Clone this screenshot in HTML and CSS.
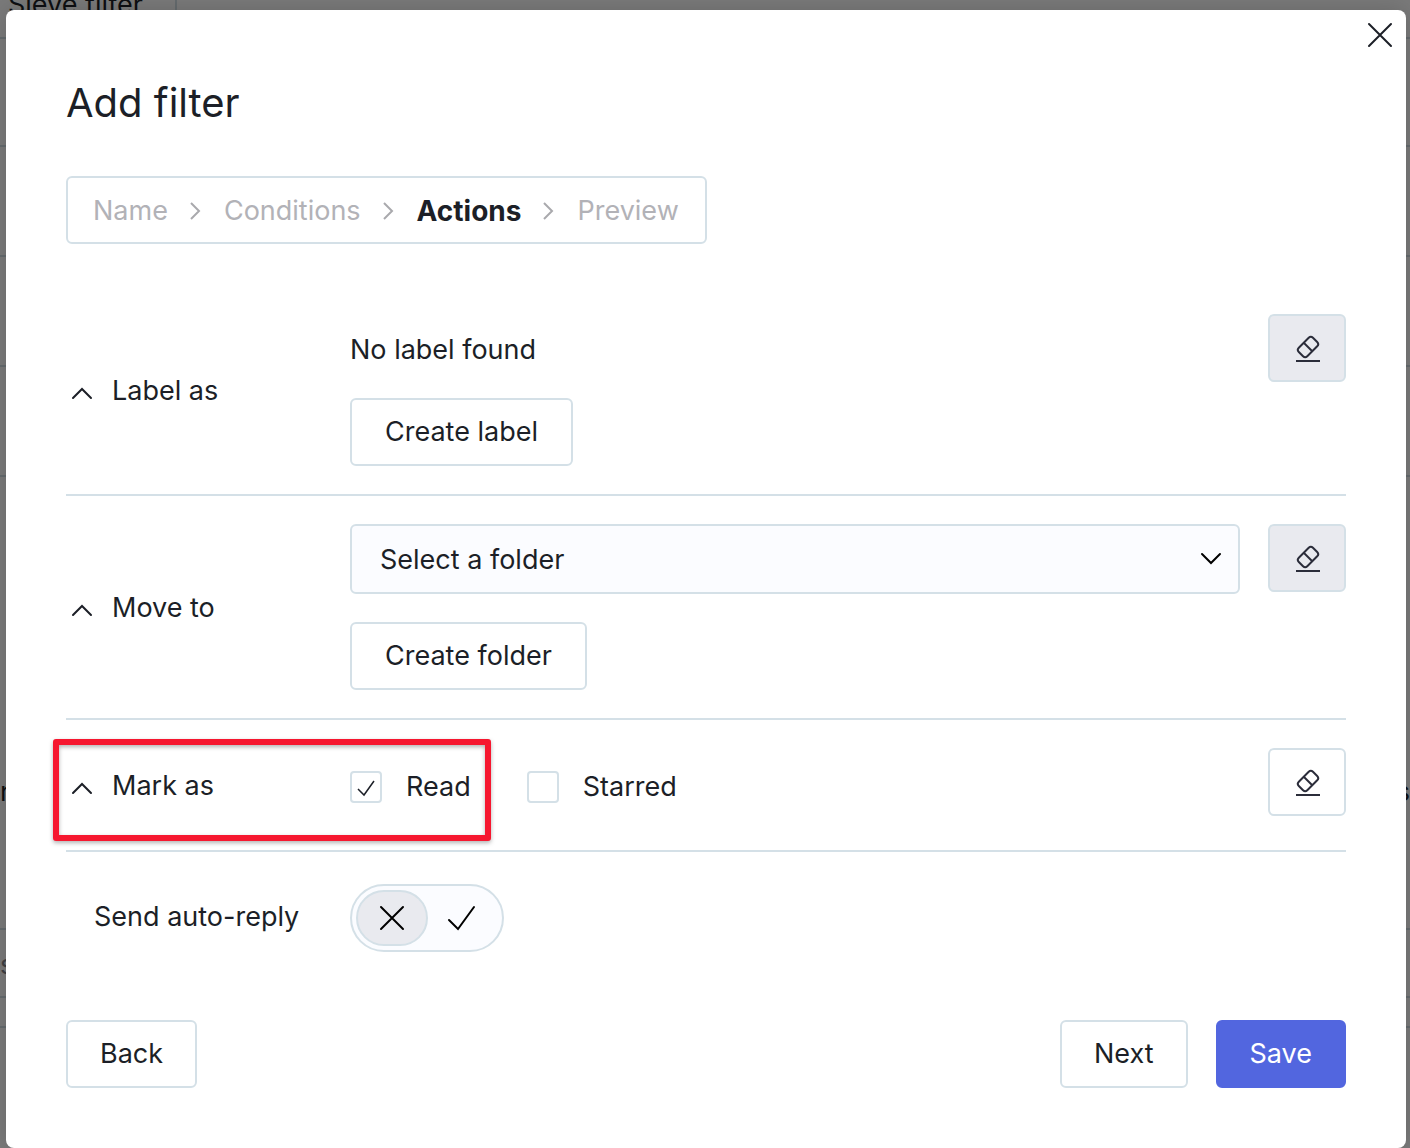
FILE: index.html
```html
<!DOCTYPE html>
<html lang="en">
<head>
<meta charset="utf-8">
<title>Add filter</title>
<link rel="stylesheet" href="styles.css">
</head>
<body>
<svg class="symbols" aria-hidden="true">
  <symbol id="eraser" viewBox="0 0 28 28">
    <g fill="none" stroke="currentColor" stroke-width="2">
      <rect x="4" y="6" width="20" height="12" rx="3" transform="rotate(-45 14 12)"/>
      <path d="M10 8l8 8"/>
      <path d="M2 26h24"/>
    </g>
  </symbol>
  <symbol id="chevron-right" viewBox="0 0 12 20">
    <path d="M1 2l8 8-8 8" fill="none" stroke="currentColor" stroke-width="2"/>
  </symbol>
  <symbol id="chevron-up" viewBox="0 0 24 24">
    <path d="M3 19l9-9 9 9" fill="none" stroke="currentColor" stroke-width="2" stroke-linecap="round"/>
  </symbol>
  <symbol id="cross" viewBox="0 0 28 28">
    <path d="M3 3l22 22M25 3L3 25" fill="none" stroke="currentColor" stroke-width="2" stroke-linecap="round"/>
  </symbol>
</svg>

<div class="page" aria-hidden="true">
  <div class="page-tabs"><span class="page-tab">Sieve filter</span></div>
  <div class="page-row page-row-head"></div>
  <div class="page-row"></div>
  <div class="page-row"></div>
  <div class="page-row"></div>
  <div class="page-row page-row-text"><span>n</span><span>s</span></div>
  <div class="page-row page-row-note">s</div>
  <div class="page-row page-row-thin"></div>
</div>

<div class="overlay">
  <form class="modal" role="dialog" aria-labelledby="title">
    <button class="close" type="button" aria-label="Close"><svg class="icon-28"><use href="#cross"/></svg></button>
    <h1 class="title" id="title">Add filter</h1>

    <nav class="steps" aria-label="Steps">
      <a class="step" href="#name">Name</a>
      <svg class="step-arrow"><use href="#chevron-right"/></svg>
      <a class="step" href="#conditions">Conditions</a>
      <svg class="step-arrow"><use href="#chevron-right"/></svg>
      <a class="step step-current" href="#actions" aria-current="step">Actions</a>
      <svg class="step-arrow"><use href="#chevron-right"/></svg>
      <a class="step" href="#preview">Preview</a>
    </nav>

    <section class="row">
      <button class="toggle-row" type="button"><svg class="icon-24"><use href="#chevron-up"/></svg>Label as</button>
      <div class="field">
        <p class="empty">No label found</p>
        <button class="btn btn-wide" type="button">Create label</button>
      </div>
      <button class="btn btn-clear" type="button" aria-label="Clear label" disabled><svg class="icon-28"><use href="#eraser"/></svg></button>
    </section>

    <section class="row">
      <button class="toggle-row" type="button"><svg class="icon-24"><use href="#chevron-up"/></svg>Move to</button>
      <div class="field field-folder">
        <div class="select-box">
          <select class="select" aria-label="Move to">
            <option>Select a folder</option>
          </select>
          <svg class="select-arrow" viewBox="0 0 24 24"><path d="M3 7l9 9 9-9" fill="none" stroke="currentColor" stroke-width="2" stroke-linecap="round"/></svg>
        </div>
        <button class="btn btn-wide" type="button">Create folder</button>
      </div>
      <button class="btn btn-clear" type="button" aria-label="Clear folder" disabled><svg class="icon-28"><use href="#eraser"/></svg></button>
    </section>

    <section class="row row-marks">
      <button class="toggle-row" type="button"><svg class="icon-24"><use href="#chevron-up"/></svg>Mark as</button>
      <div class="field marks">
        <label class="mark">
          <span class="tick">
            <input class="tick-input" type="checkbox" checked>
            <svg class="tick-mark" viewBox="0 0 28 28"><path d="M6 16l6 6L22 8" fill="none" stroke="currentColor" stroke-width="1.5"/></svg>
          </span>
          Read
        </label>
        <label class="mark">
          <span class="tick">
            <input class="tick-input" type="checkbox">
            <svg class="tick-mark" viewBox="0 0 28 28"><path d="M6 16l6 6L22 8" fill="none" stroke="currentColor" stroke-width="1.5"/></svg>
          </span>
          Starred
        </label>
      </div>
      <button class="btn btn-clear" type="button" aria-label="Clear marks"><svg class="icon-28"><use href="#eraser"/></svg></button>
      <div class="highlight"></div>
    </section>

    <section class="row row-reply">
      <label class="reply-label" for="reply">Send auto-reply</label>
      <div class="switch">
        <input class="switch-input" id="reply" type="checkbox" role="switch">
        <span class="knob"><svg class="icon-28"><use href="#cross"/></svg></span>
        <svg class="switch-check" viewBox="0 0 32 28"><path d="M3 16l9 9L28 3" fill="none" stroke="currentColor" stroke-width="2" stroke-linecap="round"/></svg>
      </div>
    </section>

    <footer class="footer">
      <button class="btn" type="button">Back</button>
      <div class="footer-end">
        <button class="btn" type="button">Next</button>
        <button class="btn btn-primary" type="submit">Save</button>
      </div>
    </footer>
  </form>
</div>
</body>
</html>
```
FILE: styles.css
```css
* {
  box-sizing: border-box;
}

body {
  position: relative;
  margin: 0;
  min-height: 100vh;
  overflow-x: hidden;
  font: 27px/42px Inter, "Liberation Sans", sans-serif;
  color: #1c1f27;
  background: #fff;
}

button,
select {
  font: inherit;
  color: inherit;
}

.symbols {
  position: absolute;
  width: 0;
  height: 0;
}

.icon-28 {
  display: block;
  flex: none;
  width: 28px;
  height: 28px;
}

.icon-24 {
  display: block;
  flex: none;
  width: 24px;
  height: 24px;
}

/* Settings page under the dialog */
.page {
  position: absolute;
  inset: 0;
  overflow: hidden;
}

.page-tabs {
  display: flex;
  height: 39px;
  border-bottom: 2px solid #d4e0e7;
}

.page-tab {
  height: 10px;
  padding: 0 32px 0 8px;
  line-height: 10px;
  border-right: 2px solid #d4e0e7;
}

.page-row {
  height: 110px;
  border-bottom: 2px solid #d4e0e7;
}

.page-row-head {
  height: 108px;
}

.page-row-text {
  display: flex;
  justify-content: space-between;
  height: 453px;
  padding-top: 294px;
}

.page-row-note {
  height: 68px;
  line-height: 70px;
  color: #85858c;
}

.page-row-thin {
  height: 30px;
}

.overlay {
  position: relative;
  min-height: 100vh;
  padding: 10px 4px 0 6px;
  background: rgba(0, 0, 0, 0.52);
}

.modal {
  position: relative;
  padding: 67px 60px 60px;
  border-radius: 8px;
  background: #fff;
  box-shadow: 0 0 24px rgba(0, 0, 0, 0.16);
}

.close {
  position: absolute;
  top: 11px;
  right: 12px;
  padding: 0;
  border: 0;
  background: none;
}

.title {
  margin: 0 0 47px;
  font-size: 40px;
  line-height: 52px;
  font-weight: 400;
}

.steps {
  display: flex;
  align-items: center;
  gap: 22px;
  width: fit-content;
  height: 68px;
  margin-bottom: 42px;
  padding: 2px 26px 0 25px;
  border: 2px solid #d4e0e7;
  border-radius: 6px;
}

.step {
  color: #b2b2b7;
  text-decoration: none;
}

.step-current {
  font-size: 28px;
  font-weight: 700;
  color: #1c1f27;
}

.step-arrow {
  width: 12px;
  height: 20px;
  color: #a9a9ad;
}

.row {
  position: relative;
  display: grid;
  grid-template-columns: 256px 1fr auto;
  column-gap: 28px;
  align-items: center;
  padding: 28px 0;
  border-bottom: 2px solid #d4e0e7;
}

.toggle-row {
  display: flex;
  align-items: center;
  gap: 18px;
  padding: 2px 0 0 4px;
  border: 0;
  background: none;
}

.field {
  display: flex;
  flex-direction: column;
  align-items: flex-start;
  gap: 14px;
}

.field-folder {
  gap: 28px;
}

.empty {
  margin: 0;
  padding: 15px 0 13px;
}

.btn {
  height: 68px;
  padding: 0 32px;
  border: 2px solid #d4e0e7;
  border-radius: 6px;
  background: #fff;
}

.btn-wide {
  padding: 0 33px;
}

.btn-clear {
  align-self: start;
  width: 78px;
  padding: 2px 23px 0 24px;
  color: #2b2d3a;
}

.btn-clear:disabled {
  background: #e9eaef;
}

.btn-primary {
  border-color: #5266df;
  background: #5266df;
  color: #fff;
}

.select-box {
  position: relative;
  width: 100%;
}

.select {
  display: block;
  width: 100%;
  height: 70px;
  padding: 2px 60px 0 28px;
  border: 2px solid #d4e0e7;
  border-radius: 6px;
  background: #fbfcff;
  appearance: none;
}

.select-arrow {
  position: absolute;
  top: 23px;
  right: 17px;
  width: 24px;
  height: 24px;
  color: #000;
  pointer-events: none;
}

.row-marks {
  grid-template-rows: 74px;
}

.marks {
  flex-direction: row;
  gap: 56px;
  padding-top: 4px;
}

.mark {
  display: flex;
  align-items: center;
  gap: 24px;
}

.tick {
  display: grid;
  place-items: center;
}

.tick-input {
  grid-area: 1 / 1;
  width: 32px;
  height: 32px;
  margin: 0;
  border: 2px solid #d4e0e7;
  border-radius: 4px;
  background: #fff;
  appearance: none;
}

.tick-mark {
  grid-area: 1 / 1;
  width: 28px;
  height: 28px;
  visibility: hidden;
  pointer-events: none;
}

.tick-input:checked + .tick-mark {
  visibility: visible;
}

/* Callout frame drawn over the "Mark as / Read" pair */
.highlight {
  position: absolute;
  top: 19px;
  left: -13px;
  width: 438px;
  height: 102px;
  border: 6px solid #f6172f;
  border-radius: 3px;
  filter: drop-shadow(0 2px 2px rgba(0, 0, 0, 0.3));
  pointer-events: none;
}

.row-reply {
  padding: 32px 0 68px;
  border-bottom: 0;
}

.reply-label {
  padding: 0 0 2px 28px;
  white-space: nowrap;
}

.switch {
  position: relative;
  display: flex;
  align-items: center;
  width: 154px;
  height: 68px;
  padding: 0 4px;
  gap: 18px;
  border: 2px solid #d4e0e7;
  border-radius: 34px;
  background: #fbfcff;
  color: #000;
}

.switch-input {
  position: absolute;
  inset: 0;
  width: 100%;
  height: 100%;
  margin: 0;
  opacity: 0;
}

.knob {
  display: grid;
  place-items: center;
  width: 72px;
  height: 56px;
  border: 2px solid #d4e0e7;
  border-radius: 28px;
  background: #e9eaef;
}

.switch-check {
  width: 32px;
  height: 28px;
}

.footer,
.footer-end {
  display: flex;
  justify-content: space-between;
  gap: 28px;
}
```
